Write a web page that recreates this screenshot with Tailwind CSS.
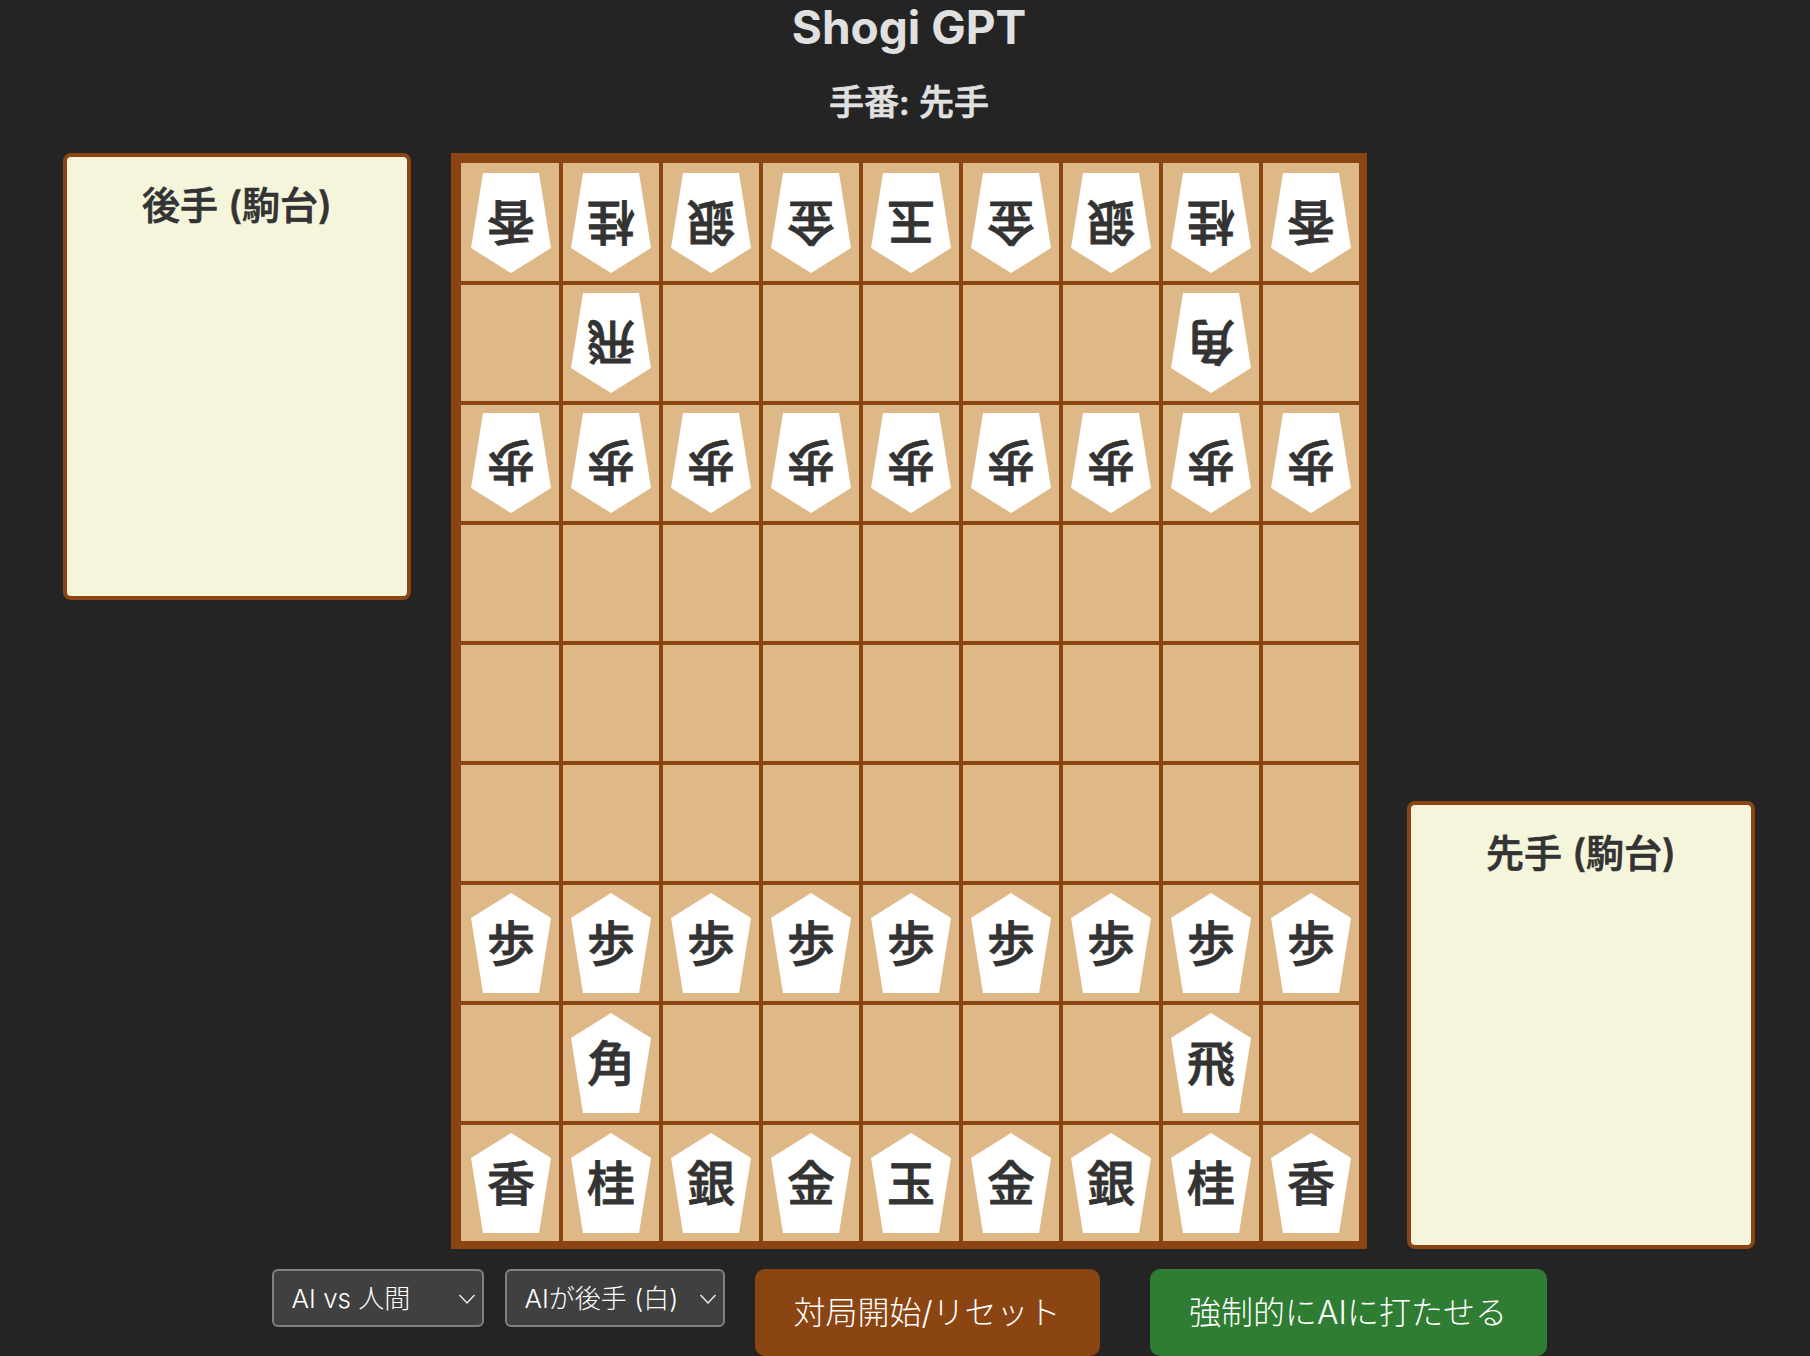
<!doctype html>
<html lang="ja"><head><meta charset="utf-8"><script src="https://cdn.jsdelivr.net/npm/@tailwindcss/browser@4"></script></head>
<body class="h-[1356px] overflow-hidden bg-[#242424] text-[#e0e0e0] font-['Inter','Noto_Sans_CJK_JP',sans-serif]">
<div class="flex flex-col items-center pl-[8px]">
<h1 class="h-[58px] text-[46px] leading-[54px] font-bold">Shogi GPT</h1>
<p class="mt-[22px] text-[35px] leading-[44px] font-medium [-webkit-text-stroke:0.7px_#e0e0e0]">手番: 先手</p>
<div class="mt-[29px] flex gap-[40px]">
<aside class="self-start h-[447px] w-[348px] rounded-lg border-4 border-[#8b4513] bg-[#f5f5dc] pt-[26px] text-center text-[38px] leading-[44px] font-medium text-[#333] [-webkit-text-stroke:0.7px_#333]">後手 (駒台)</aside>
<div class="grid grid-cols-[98px_repeat(8,96px)] grid-rows-[118px_repeat(8,116px)] gap-[4px] bg-[#8b4513] pt-[10px] pr-[8px] pb-[8px] pl-[10px] text-[48px] font-medium text-[#333] [-webkit-text-stroke:0.8px_#333]">
<div class="flex items-end justify-center bg-[#deb887] pb-[8px] pl-[2px]"><span class="flex h-[100px] w-[80px] rotate-180 items-center justify-center bg-white pt-[2px] [clip-path:polygon(50%_0%,100%_25%,85%_100%,15%_100%,0%_25%)]">香</span></div>
<div class="flex items-end justify-center bg-[#deb887] pb-[8px]"><span class="flex h-[100px] w-[80px] rotate-180 items-center justify-center bg-white pt-[2px] [clip-path:polygon(50%_0%,100%_25%,85%_100%,15%_100%,0%_25%)]">桂</span></div>
<div class="flex items-end justify-center bg-[#deb887] pb-[8px]"><span class="flex h-[100px] w-[80px] rotate-180 items-center justify-center bg-white pt-[2px] [clip-path:polygon(50%_0%,100%_25%,85%_100%,15%_100%,0%_25%)]">銀</span></div>
<div class="flex items-end justify-center bg-[#deb887] pb-[8px]"><span class="flex h-[100px] w-[80px] rotate-180 items-center justify-center bg-white pt-[2px] [clip-path:polygon(50%_0%,100%_25%,85%_100%,15%_100%,0%_25%)]">金</span></div>
<div class="flex items-end justify-center bg-[#deb887] pb-[8px]"><span class="flex h-[100px] w-[80px] rotate-180 items-center justify-center bg-white pt-[2px] [clip-path:polygon(50%_0%,100%_25%,85%_100%,15%_100%,0%_25%)]">玉</span></div>
<div class="flex items-end justify-center bg-[#deb887] pb-[8px]"><span class="flex h-[100px] w-[80px] rotate-180 items-center justify-center bg-white pt-[2px] [clip-path:polygon(50%_0%,100%_25%,85%_100%,15%_100%,0%_25%)]">金</span></div>
<div class="flex items-end justify-center bg-[#deb887] pb-[8px]"><span class="flex h-[100px] w-[80px] rotate-180 items-center justify-center bg-white pt-[2px] [clip-path:polygon(50%_0%,100%_25%,85%_100%,15%_100%,0%_25%)]">銀</span></div>
<div class="flex items-end justify-center bg-[#deb887] pb-[8px]"><span class="flex h-[100px] w-[80px] rotate-180 items-center justify-center bg-white pt-[2px] [clip-path:polygon(50%_0%,100%_25%,85%_100%,15%_100%,0%_25%)]">桂</span></div>
<div class="flex items-end justify-center bg-[#deb887] pb-[8px]"><span class="flex h-[100px] w-[80px] rotate-180 items-center justify-center bg-white pt-[2px] [clip-path:polygon(50%_0%,100%_25%,85%_100%,15%_100%,0%_25%)]">香</span></div>
<!--row2-->
<div class="bg-[#deb887]"></div>
<div class="flex items-center justify-center bg-[#deb887]"><span class="flex h-[100px] w-[80px] rotate-180 items-center justify-center bg-white pt-[2px] [clip-path:polygon(50%_0%,100%_25%,85%_100%,15%_100%,0%_25%)]">飛</span></div>
<div class="bg-[#deb887]"></div><div class="bg-[#deb887]"></div><div class="bg-[#deb887]"></div><div class="bg-[#deb887]"></div><div class="bg-[#deb887]"></div>
<div class="flex items-center justify-center bg-[#deb887]"><span class="flex h-[100px] w-[80px] rotate-180 items-center justify-center bg-white pt-[2px] [clip-path:polygon(50%_0%,100%_25%,85%_100%,15%_100%,0%_25%)]">角</span></div>
<div class="bg-[#deb887]"></div>
<!--row3-->
<div class="flex items-center justify-center bg-[#deb887] pl-[2px]"><span class="flex h-[100px] w-[80px] rotate-180 items-center justify-center bg-white pt-[2px] [clip-path:polygon(50%_0%,100%_25%,85%_100%,15%_100%,0%_25%)]">歩</span></div>
<div class="flex items-center justify-center bg-[#deb887]"><span class="flex h-[100px] w-[80px] rotate-180 items-center justify-center bg-white pt-[2px] [clip-path:polygon(50%_0%,100%_25%,85%_100%,15%_100%,0%_25%)]">歩</span></div>
<div class="flex items-center justify-center bg-[#deb887]"><span class="flex h-[100px] w-[80px] rotate-180 items-center justify-center bg-white pt-[2px] [clip-path:polygon(50%_0%,100%_25%,85%_100%,15%_100%,0%_25%)]">歩</span></div>
<div class="flex items-center justify-center bg-[#deb887]"><span class="flex h-[100px] w-[80px] rotate-180 items-center justify-center bg-white pt-[2px] [clip-path:polygon(50%_0%,100%_25%,85%_100%,15%_100%,0%_25%)]">歩</span></div>
<div class="flex items-center justify-center bg-[#deb887]"><span class="flex h-[100px] w-[80px] rotate-180 items-center justify-center bg-white pt-[2px] [clip-path:polygon(50%_0%,100%_25%,85%_100%,15%_100%,0%_25%)]">歩</span></div>
<div class="flex items-center justify-center bg-[#deb887]"><span class="flex h-[100px] w-[80px] rotate-180 items-center justify-center bg-white pt-[2px] [clip-path:polygon(50%_0%,100%_25%,85%_100%,15%_100%,0%_25%)]">歩</span></div>
<div class="flex items-center justify-center bg-[#deb887]"><span class="flex h-[100px] w-[80px] rotate-180 items-center justify-center bg-white pt-[2px] [clip-path:polygon(50%_0%,100%_25%,85%_100%,15%_100%,0%_25%)]">歩</span></div>
<div class="flex items-center justify-center bg-[#deb887]"><span class="flex h-[100px] w-[80px] rotate-180 items-center justify-center bg-white pt-[2px] [clip-path:polygon(50%_0%,100%_25%,85%_100%,15%_100%,0%_25%)]">歩</span></div>
<div class="flex items-center justify-center bg-[#deb887]"><span class="flex h-[100px] w-[80px] rotate-180 items-center justify-center bg-white pt-[2px] [clip-path:polygon(50%_0%,100%_25%,85%_100%,15%_100%,0%_25%)]">歩</span></div>
<!--rows 4-6-->
<div class="bg-[#deb887]"></div><div class="bg-[#deb887]"></div><div class="bg-[#deb887]"></div><div class="bg-[#deb887]"></div><div class="bg-[#deb887]"></div><div class="bg-[#deb887]"></div><div class="bg-[#deb887]"></div><div class="bg-[#deb887]"></div><div class="bg-[#deb887]"></div>
<div class="bg-[#deb887]"></div><div class="bg-[#deb887]"></div><div class="bg-[#deb887]"></div><div class="bg-[#deb887]"></div><div class="bg-[#deb887]"></div><div class="bg-[#deb887]"></div><div class="bg-[#deb887]"></div><div class="bg-[#deb887]"></div><div class="bg-[#deb887]"></div>
<div class="bg-[#deb887]"></div><div class="bg-[#deb887]"></div><div class="bg-[#deb887]"></div><div class="bg-[#deb887]"></div><div class="bg-[#deb887]"></div><div class="bg-[#deb887]"></div><div class="bg-[#deb887]"></div><div class="bg-[#deb887]"></div><div class="bg-[#deb887]"></div>
<!--row7-->
<div class="flex items-center justify-center bg-[#deb887] pl-[2px]"><span class="flex h-[100px] w-[80px] items-center justify-center bg-white pt-[2px] [clip-path:polygon(50%_0%,100%_25%,85%_100%,15%_100%,0%_25%)]">歩</span></div>
<div class="flex items-center justify-center bg-[#deb887]"><span class="flex h-[100px] w-[80px] items-center justify-center bg-white pt-[2px] [clip-path:polygon(50%_0%,100%_25%,85%_100%,15%_100%,0%_25%)]">歩</span></div>
<div class="flex items-center justify-center bg-[#deb887]"><span class="flex h-[100px] w-[80px] items-center justify-center bg-white pt-[2px] [clip-path:polygon(50%_0%,100%_25%,85%_100%,15%_100%,0%_25%)]">歩</span></div>
<div class="flex items-center justify-center bg-[#deb887]"><span class="flex h-[100px] w-[80px] items-center justify-center bg-white pt-[2px] [clip-path:polygon(50%_0%,100%_25%,85%_100%,15%_100%,0%_25%)]">歩</span></div>
<div class="flex items-center justify-center bg-[#deb887]"><span class="flex h-[100px] w-[80px] items-center justify-center bg-white pt-[2px] [clip-path:polygon(50%_0%,100%_25%,85%_100%,15%_100%,0%_25%)]">歩</span></div>
<div class="flex items-center justify-center bg-[#deb887]"><span class="flex h-[100px] w-[80px] items-center justify-center bg-white pt-[2px] [clip-path:polygon(50%_0%,100%_25%,85%_100%,15%_100%,0%_25%)]">歩</span></div>
<div class="flex items-center justify-center bg-[#deb887]"><span class="flex h-[100px] w-[80px] items-center justify-center bg-white pt-[2px] [clip-path:polygon(50%_0%,100%_25%,85%_100%,15%_100%,0%_25%)]">歩</span></div>
<div class="flex items-center justify-center bg-[#deb887]"><span class="flex h-[100px] w-[80px] items-center justify-center bg-white pt-[2px] [clip-path:polygon(50%_0%,100%_25%,85%_100%,15%_100%,0%_25%)]">歩</span></div>
<div class="flex items-center justify-center bg-[#deb887]"><span class="flex h-[100px] w-[80px] items-center justify-center bg-white pt-[2px] [clip-path:polygon(50%_0%,100%_25%,85%_100%,15%_100%,0%_25%)]">歩</span></div>
<!--row8-->
<div class="bg-[#deb887]"></div>
<div class="flex items-center justify-center bg-[#deb887]"><span class="flex h-[100px] w-[80px] items-center justify-center bg-white pt-[2px] [clip-path:polygon(50%_0%,100%_25%,85%_100%,15%_100%,0%_25%)]">角</span></div>
<div class="bg-[#deb887]"></div><div class="bg-[#deb887]"></div><div class="bg-[#deb887]"></div><div class="bg-[#deb887]"></div><div class="bg-[#deb887]"></div>
<div class="flex items-center justify-center bg-[#deb887]"><span class="flex h-[100px] w-[80px] items-center justify-center bg-white pt-[2px] [clip-path:polygon(50%_0%,100%_25%,85%_100%,15%_100%,0%_25%)]">飛</span></div>
<div class="bg-[#deb887]"></div>
<!--row9-->
<div class="flex items-center justify-center bg-[#deb887] pl-[2px]"><span class="flex h-[100px] w-[80px] items-center justify-center bg-white pt-[2px] [clip-path:polygon(50%_0%,100%_25%,85%_100%,15%_100%,0%_25%)]">香</span></div>
<div class="flex items-center justify-center bg-[#deb887]"><span class="flex h-[100px] w-[80px] items-center justify-center bg-white pt-[2px] [clip-path:polygon(50%_0%,100%_25%,85%_100%,15%_100%,0%_25%)]">桂</span></div>
<div class="flex items-center justify-center bg-[#deb887]"><span class="flex h-[100px] w-[80px] items-center justify-center bg-white pt-[2px] [clip-path:polygon(50%_0%,100%_25%,85%_100%,15%_100%,0%_25%)]">銀</span></div>
<div class="flex items-center justify-center bg-[#deb887]"><span class="flex h-[100px] w-[80px] items-center justify-center bg-white pt-[2px] [clip-path:polygon(50%_0%,100%_25%,85%_100%,15%_100%,0%_25%)]">金</span></div>
<div class="flex items-center justify-center bg-[#deb887]"><span class="flex h-[100px] w-[80px] items-center justify-center bg-white pt-[2px] [clip-path:polygon(50%_0%,100%_25%,85%_100%,15%_100%,0%_25%)]">玉</span></div>
<div class="flex items-center justify-center bg-[#deb887]"><span class="flex h-[100px] w-[80px] items-center justify-center bg-white pt-[2px] [clip-path:polygon(50%_0%,100%_25%,85%_100%,15%_100%,0%_25%)]">金</span></div>
<div class="flex items-center justify-center bg-[#deb887]"><span class="flex h-[100px] w-[80px] items-center justify-center bg-white pt-[2px] [clip-path:polygon(50%_0%,100%_25%,85%_100%,15%_100%,0%_25%)]">銀</span></div>
<div class="flex items-center justify-center bg-[#deb887]"><span class="flex h-[100px] w-[80px] items-center justify-center bg-white pt-[2px] [clip-path:polygon(50%_0%,100%_25%,85%_100%,15%_100%,0%_25%)]">桂</span></div>
<div class="flex items-center justify-center bg-[#deb887]"><span class="flex h-[100px] w-[80px] items-center justify-center bg-white pt-[2px] [clip-path:polygon(50%_0%,100%_25%,85%_100%,15%_100%,0%_25%)]">香</span></div>
</div>
<aside class="self-end h-[448px] w-[348px] rounded-lg border-4 border-[#8b4513] bg-[#f5f5dc] pt-[26px] text-center text-[38px] leading-[44px] font-medium text-[#333] [-webkit-text-stroke:0.7px_#333]">先手 (駒台)</aside>
</div>
<div class="mt-[20px] flex items-start">
<div class="relative">
<select class="h-[58px] w-[212px] appearance-none rounded-md border-2 border-[#808080] bg-[#404040] pl-[18px] text-[26px] font-light text-white"><option>AI vs 人間</option></select>
<svg class="absolute right-[8px] top-[24px] h-[12px] w-[18px]" viewBox="0 0 18 12" fill="none" stroke="#eee" stroke-width="1.4"><path d="M1.5 2 9 10 16.5 2"/></svg>
</div>
<div class="relative ml-[21px]">
<select class="h-[58px] w-[220px] appearance-none rounded-md border-2 border-[#808080] bg-[#404040] pl-[18px] text-[26px] font-light text-white"><option>AIが後手 (白)</option></select>
<svg class="absolute right-[8px] top-[24px] h-[12px] w-[18px]" viewBox="0 0 18 12" fill="none" stroke="#eee" stroke-width="1.4"><path d="M1.5 2 9 10 16.5 2"/></svg>
</div>
<button class="ml-[30px] h-[87px] w-[345px] rounded-[10px] bg-[#8b4513] text-[32px] font-light text-white">対局開始/リセット</button>
<button class="ml-[50px] h-[87px] w-[397px] rounded-[10px] bg-[#2e7d32] text-[32px] font-light text-white">強制的にAIに打たせる</button>
</div>
</div>
</body></html>
